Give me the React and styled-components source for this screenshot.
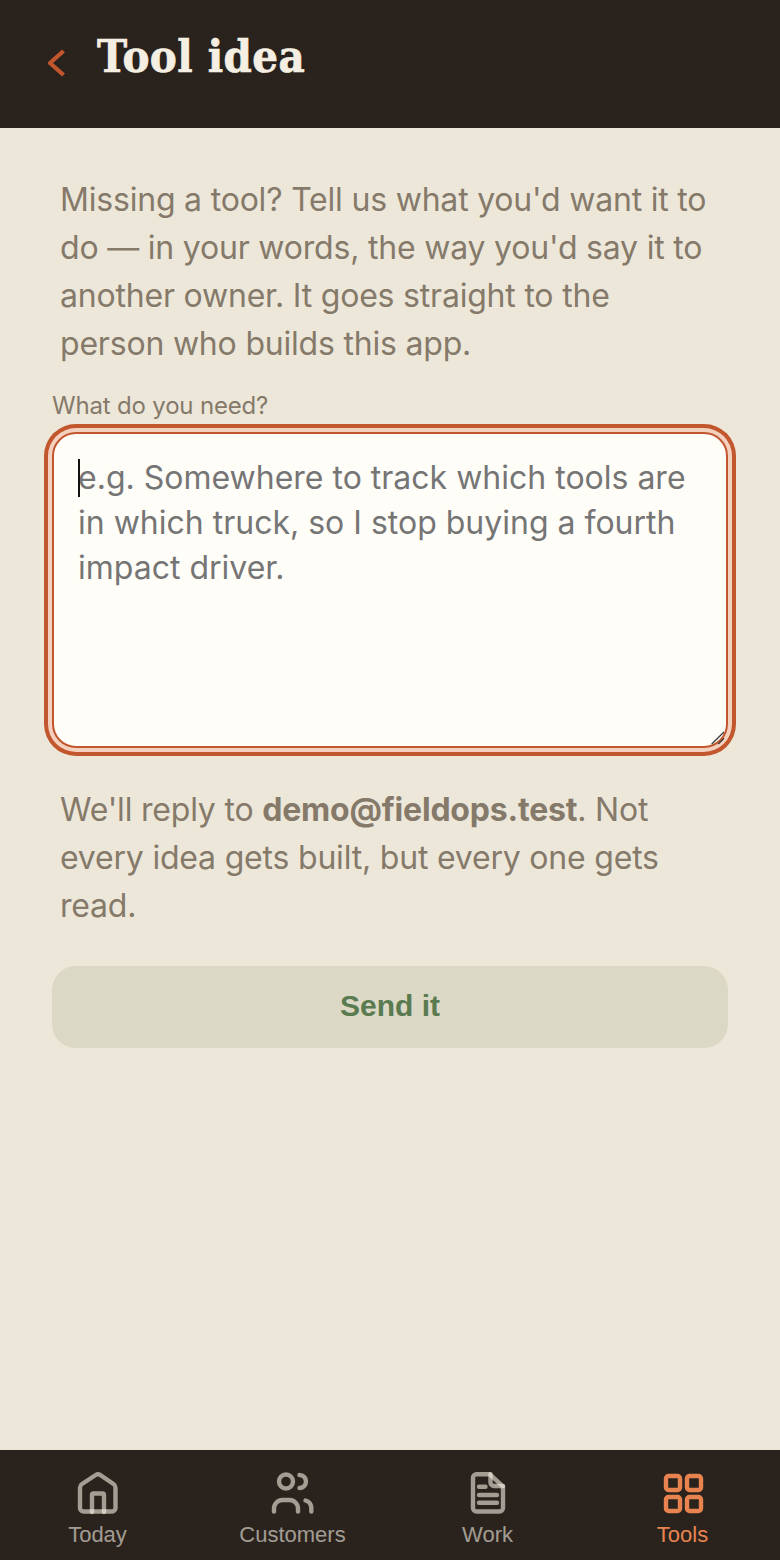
import React from "react";
import styled, { createGlobalStyle } from "styled-components";

const GlobalStyle = createGlobalStyle`
  html, body { margin: 0; padding: 0; background: #ede7da; }
  * { box-sizing: border-box; }
`;

const HomeIcon = () => (
  <NavIcon viewBox="0 0 56 56">
    <path d="M12 19 25.7 10a4 4 0 0 1 4.6 0L43.5 19a4.5 4.5 0 0 1 2 3.5V43a3.5 3.5 0 0 1-3.5 3.5H13.5A3.5 3.5 0 0 1 10 43V22.5A4.5 4.5 0 0 1 12 19z" />
    <path d="M22 47V30a1.5 1.5 0 0 1 1.5-1.5h9a1.5 1.5 0 0 1 1.5 1.5v17" />
  </NavIcon>
);

const UsersIcon = () => (
  <NavIcon viewBox="0 0 56 56">
    <circle cx="21" cy="16.5" r="7" />
    <path d="M34.5 10a6.5 6.5 0 0 1 0 13" />
    <path d="M9 46.5v-3a8.5 8.5 0 0 1 8.5-8.5h7a8.5 8.5 0 0 1 8.5 8.5v3" />
    <path d="M40.5 35.5a8 8 0 0 1 5.8 7.5v3.5" />
  </NavIcon>
);

const FileIcon = () => (
  <NavIcon viewBox="0 0 56 56">
    <path d="M16.5 9.3H30L43 21.5V43a3.5 3.5 0 0 1-3.5 3.5h-23A3.5 3.5 0 0 1 13 43V12.8a3.5 3.5 0 0 1 3.5-3.5z" />
    <path d="M30.5 9.3v8.2a3.5 3.5 0 0 0 3.5 3.5h9" />
    <path d="M19 21.7h6.5" />
    <path d="M19 30h18" />
    <path d="M19 37.7h18" />
  </NavIcon>
);

const GridIcon = () => (
  <NavIcon viewBox="0 0 56 56">
    <rect x="11" y="11" width="14" height="14" rx="2.5" />
    <rect x="32" y="11" width="14" height="14" rx="2.5" />
    <rect x="11" y="32" width="14" height="14" rx="2.5" />
    <rect x="32" y="32" width="14" height="14" rx="2.5" />
  </NavIcon>
);

const NAV_ITEMS = [
  { label: "Today", Icon: HomeIcon },
  { label: "Customers", Icon: UsersIcon },
  { label: "Work", Icon: FileIcon },
  { label: "Tools", Icon: GridIcon, active: true },
];

export default function App() {
  return (
    <Page>
      <GlobalStyle />
      <Header>
        <BackButton aria-label="Back">
          <BackIcon viewBox="0 0 48 48">
            <path d="M31.5 12 18 24l13.5 12" />
          </BackIcon>
        </BackButton>
        <Title>Tool idea</Title>
      </Header>
      <Main>
        <Copy>
          Missing a tool? Tell us what you'd want it to do — in your words, the
          way you'd say it to another owner. It goes straight to the person who
          builds this app.
        </Copy>
        <Label htmlFor="idea">What do you need?</Label>
        <InputWrap>
          <IdeaInput
            id="idea"
            placeholder="e.g. Somewhere to track which tools are in which truck, so I stop buying a fourth impact driver."
          />
          <Caret />
          <Grip viewBox="0 0 16 16">
            <path d="M1.7 13 14 1" />
            <path d="M8.3 13 14 7.3" />
          </Grip>
        </InputWrap>
        <Copy>
          We'll reply to <strong>demo@fieldops.test</strong>. Not every idea
          gets built, but every one gets read.
        </Copy>
        <SendButton type="button">Send it</SendButton>
      </Main>
      <BottomNav>
        {NAV_ITEMS.map(({ label, Icon, active }) => (
          <NavItem key={label} $active={active}>
            <Icon />
            <span>{label}</span>
          </NavItem>
        ))}
      </BottomNav>
    </Page>
  );
}

const Page = styled.div`
  display: flex;
  flex-direction: column;
  min-height: 1560px;
  background: #ede7da;
`;

const Header = styled.header`
  display: flex;
  align-items: flex-start;
  gap: 17px;
  height: 128px;
  padding: 32px 32px 0;
  background: #2a231d;
`;

const BackButton = styled.button`
  display: flex;
  width: 48px;
  height: 48px;
  margin-top: 7px;
  padding: 0;
  border: 0;
  background: none;
  color: #c2562d;
`;

const BackIcon = styled.svg`
  width: 48px;
  height: 48px;
  fill: none;
  stroke: currentColor;
  stroke-width: 4.2;
  stroke-linejoin: round;
`;

const Title = styled.h1`
  margin: 0;
  font-family: "DejaVu Serif Condensed", "DejaVu Serif", serif;
  font-stretch: condensed;
  font-size: 45px;
  line-height: 50px;
  font-weight: 700;
  letter-spacing: 0.45px;
  -webkit-text-stroke: 0.7px #f5efe3;
  color: #f5efe3;
`;

const Main = styled.main`
  flex: 1;
  display: flex;
  flex-direction: column;
  padding: 48px 52px 0;
`;

const Copy = styled.p`
  margin: 0 0 24px;
  padding: 0 8px;
  font-family: Inter, sans-serif;
  font-size: 32px;
  line-height: 48px;
  letter-spacing: -0.2px;
  color: #857a6a;

  strong {
    font-weight: 700;
  }
`;

const Label = styled.label`
  margin-bottom: 12px;
  font-family: Inter, sans-serif;
  font-size: 24px;
  line-height: 28px;
  letter-spacing: -0.18px;
  color: #857a6a;
`;

const InputWrap = styled.div`
  position: relative;
  width: 676px;
  height: 316px;
  margin-bottom: 38px;
`;

const IdeaInput = styled.textarea`
  display: block;
  width: 100%;
  height: 100%;
  padding: 21px 24px 24px;
  border: 2px solid #c2562d;
  border-radius: 24px;
  background: #fffdf8;
  font-family: Inter, sans-serif;
  font-size: 32px;
  line-height: 45px;
  color: #2a231d;
  outline: none;
  resize: none;
  box-shadow: 0 0 0 4px #f4d0be, 0 0 0 8px #c2562d;
`;

const Caret = styled.span`
  position: absolute;
  left: 26px;
  top: 27px;
  width: 2px;
  height: 38px;
  background: #111;
`;

const Grip = styled.svg`
  position: absolute;
  right: 2px;
  bottom: 1px;
  width: 16px;
  height: 16px;
  fill: none;
  stroke: #3a3a3a;
  stroke-width: 1.3;
  pointer-events: none;
`;

const SendButton = styled.button`
  height: 82px;
  margin-top: 12px;
  padding: 0 0 2px;
  border: 0;
  border-radius: 24px;
  background: #dbd8c5;
  font-family: "Liberation Sans", Arial, sans-serif;
  font-size: 30px;
  font-weight: 700;
  color: #5a7a50;
`;

const BottomNav = styled.nav`
  display: grid;
  grid-template-columns: repeat(4, 1fr);
  height: 110px;
  background: #2a231d;
`;

const NavItem = styled.a`
  display: flex;
  flex-direction: column;
  align-items: center;
  padding-top: 15px;
  font-family: "Liberation Sans", Arial, sans-serif;
  font-size: 22px;
  line-height: 26px;
  color: ${(props) => (props.$active ? "#e8834f" : "rgba(245, 239, 227, 0.6)")};
`;

const NavIcon = styled.svg`
  display: block;
  width: 56px;
  height: 56px;
  margin-bottom: 1px;
  fill: none;
  stroke: currentColor;
  stroke-width: 4.4;
  stroke-linecap: round;
  stroke-linejoin: round;
`;
